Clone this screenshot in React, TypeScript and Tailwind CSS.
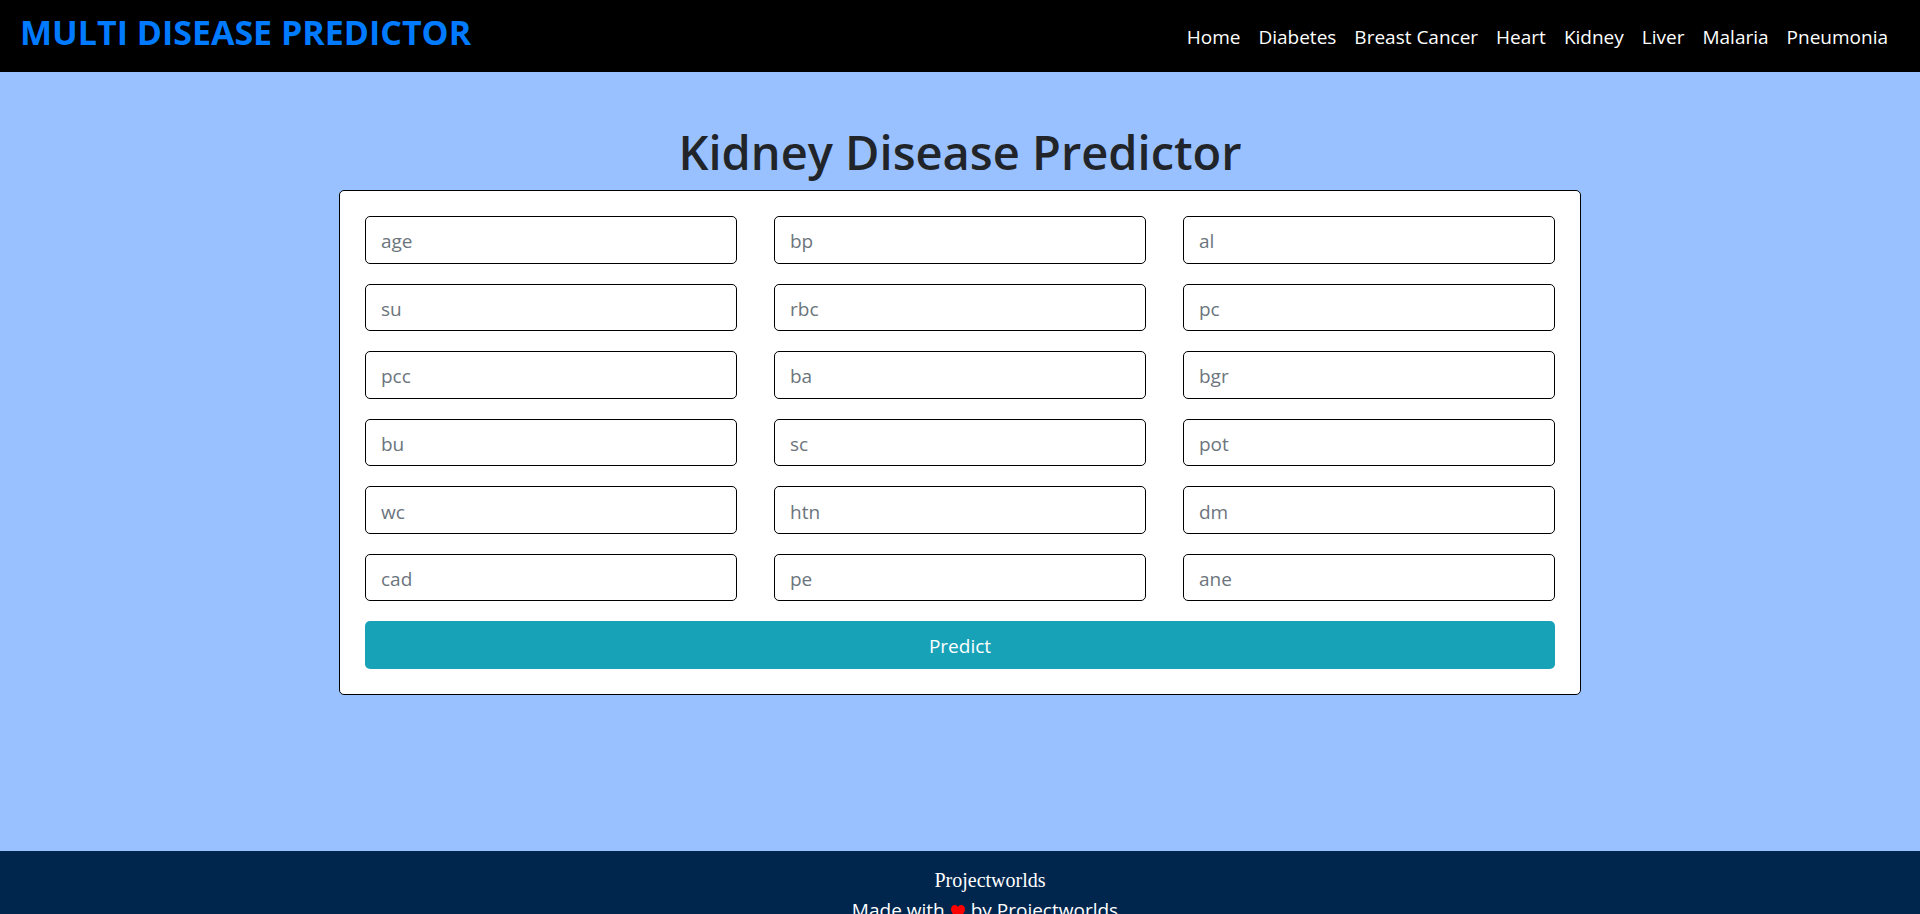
const links = ["Home", "Diabetes", "Breast Cancer", "Heart", "Kidney", "Liver", "Malaria", "Pneumonia"];

const fields = [
  "age", "bp", "al",
  "su", "rbc", "pc",
  "pcc", "ba", "bgr",
  "bu", "sc", "pot",
  "wc", "htn", "dm",
  "cad", "pe", "ane",
];

function Heart() {
  return (
    <svg viewBox="0 0 14 13" className="mx-[6px] inline-block h-[13px] w-[14px] fill-[#ff0000]" aria-hidden="true">
      <path d="M7 13C5 11.600 0 8.500 0 4.200 0 1.700 1.600 0 3.700 0 5.200 0 6.400.800 7 2.100 7.600.800 8.800 0 10.300 0 12.400 0 14 1.700 14 4.200 14 8.500 9 11.600 7 13Z" />
    </svg>
  );
}

export default function App() {
  return (
    <div className="flex h-screen flex-col overflow-hidden bg-[#99c1ff] font-['Open_Sans','Noto_Sans',sans-serif] text-[19px] leading-[30px] text-[#212529]">
      <header className="flex shrink-0 items-start justify-between bg-black px-5">
        <a href="#" className="pt-[10px] text-[34px] leading-[45px] font-bold whitespace-nowrap text-[#007bff]">
          MULTI DISEASE PREDICTOR
        </a>
        <nav className="flex h-[72px] items-center pr-[3px]">
          {links.map((link) => (
            <a key={link} href="#" className="px-[9px] pt-[2px] whitespace-nowrap text-white">
              {link}
            </a>
          ))}
        </nav>
      </header>

      <main className="shrink-0 px-5 pt-[50px] pb-[156px]">
        <h1 className="mb-2 text-center text-[47px] leading-[60px] font-semibold">Kidney Disease Predictor</h1>
        <form
          className="mx-auto grid min-h-[505px] max-w-[1242px] auto-rows-fr grid-cols-3 gap-x-[37px] gap-y-5 rounded-[5px] border border-black bg-white p-[25px]"
          onSubmit={(e) => e.preventDefault()}
        >
          {fields.map((name) => (
            <input
              key={name}
              type="text"
              name={name}
              aria-label={name}
              placeholder={name}
              className="w-full min-w-0 rounded-[5px] border border-black bg-white px-[15px] pt-[3px] placeholder:text-[#6c757d]"
            />
          ))}
          <button type="submit" className="col-span-3 rounded-[5px] bg-[#17a2b8] pt-[2px] text-white">
            Predict
          </button>
        </form>
      </main>

      <footer className="shrink-0 bg-[#00264d] pt-[14px] pb-5 pl-[50px] text-center text-white">
        <p className="pl-[10px] font-['Liberation_Serif',serif] text-[20px]">Projectworlds</p>
        <p>
          Made with
          <Heart />
          by Projectworlds
        </p>
      </footer>
    </div>
  );
}
